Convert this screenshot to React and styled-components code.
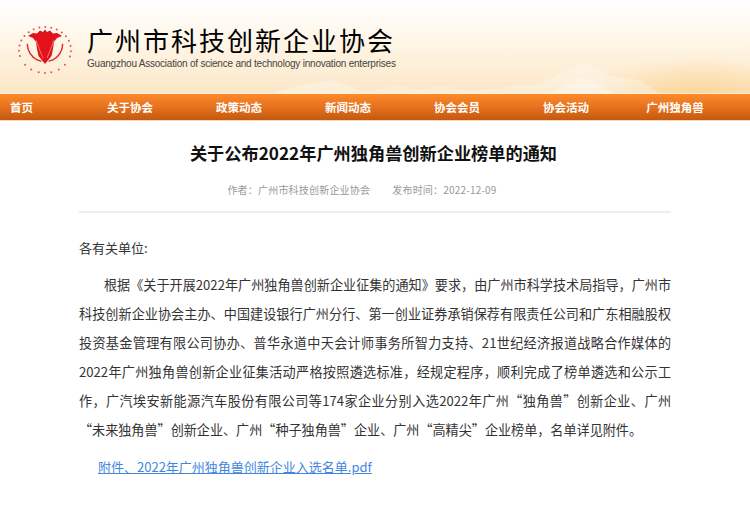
import React from "react";
import styled, { createGlobalStyle } from "styled-components";

const cjk = `"Noto Sans CJK SC", "Liberation Sans", sans-serif`;

const Global = createGlobalStyle`
  html, body { margin: 0; padding: 0; background: #fff; }
  body { font-family: ${cjk}; color: #333; }
`;

const Banner = styled.header`
  position: relative;
  height: 94px;
  display: flex;
  align-items: flex-start;
  overflow: hidden;
  background:
    radial-gradient(ellipse 110px 36px at 700px 94px, #fbd79c 0%, rgba(251,215,156,0) 100%),
    linear-gradient(to bottom, #ffffff 0%, #fffaf2 25%, #fef3e0 55%, #fdebd0 85%, #fce6c6 100%);
`;

const Mountains = styled.svg`
  position: absolute;
  left: 0;
  bottom: 0;
`;

const Logo = styled.svg`
  position: relative;
  flex: none;
  margin: 25px 0 0 16px;
`;

const Brand = styled.div`
  position: relative;
  margin: 24px 0 0 13px;
  display: flex;
  flex-direction: column;
`;

const BrandName = styled.div`
  font-size: 26px;
  line-height: 32px;
  letter-spacing: 2px;
  color: #000;
  white-space: nowrap;
`;

const BrandSub = styled.div`
  margin-top: 1px;
  font-family: "Liberation Sans", Arial, sans-serif;
  font-size: 10px;
  line-height: 14px;
  letter-spacing: -0.22px;
  color: #444;
  white-space: nowrap;
`;

const Nav = styled.nav`
  height: 26px;
  padding-left: 10px;
  display: flex;
  align-items: center;
  background: linear-gradient(to bottom, #fd8a2a 0%, #e87420 45%, #c4590d 100%);
  border-bottom: 1px solid #f4d9c0;
`;

const NavItem = styled.a`
  flex: none;
  width: ${(p) => (p.$first ? "65.5px" : "109px")};
  text-align: ${(p) => (p.$first ? "left" : "center")};
  font-size: 11.5px;
  font-weight: 700;
  line-height: 26px;
  color: #fff;
`;

const Article = styled.main`
  width: 592px;
  margin: 0 auto;
`;

const Title = styled.h1`
  margin: 20px 3px 0 0;
  font-size: 17.2px;
  line-height: 24px;
  font-weight: 700;
  color: #111;
  text-align: center;
`;

const Meta = styled.div`
  margin-top: 17px;
  padding: 0 26px 13px 0;
  display: flex;
  justify-content: center;
  gap: 22px;
  font-size: 10px;
  line-height: 16px;
  letter-spacing: 0.2px;
  color: #999;
  border-bottom: 2px solid #eee;
`;

const Salute = styled.p`
  margin: 20px 0 0;
  font-size: 13px;
  line-height: 29px;
  color: #333;
`;

const Body = styled.p`
  margin: 9px 0 0;
  font-size: 13.1px;
  line-height: 28.9px;
  text-indent: 25px;
  text-align: justify;
  color: #333;
`;

const Attachment = styled.a`
  display: inline-block;
  margin: 8px 0 0 19px;
  font-size: 13px;
  line-height: 29px;
  color: #3f86e0;
  text-decoration: underline;
`;

const rad = (d) => (d * Math.PI) / 180;
// outer ring of tiny characters in the emblem, with a gap either side of the bottom
const ringAngles = [
  ...Array.from({ length: 17 }, (_, i) => 165 + i * 13.2),
  ...[40, 58, 76, 90, 104, 122, 140],
];
const wreathAngles = [8, 24, 40, 56, 70, 110, 124, 140, 156, 172];

const FlowerLogo = () => (
  <Logo width="58" height="50" viewBox="0 0 58 50">
    {ringAngles.map((a) => (
      <circle key={a} cx={29 + 26 * Math.cos(rad(a))} cy={25 + 23 * Math.sin(rad(a))} r="1" fill="#e9505a" />
    ))}
    {wreathAngles.map((a) => {
      const x = 29 + 17.5 * Math.cos(rad(a));
      const y = 19 + 17.5 * Math.sin(rad(a));
      return (
        <line
          key={a}
          x1={x - 2.6 * Math.sin(rad(a))}
          y1={y + 2.6 * Math.cos(rad(a))}
          x2={x + 2.6 * Math.sin(rad(a))}
          y2={y - 2.6 * Math.cos(rad(a))}
          stroke="#e3262c"
          strokeWidth="1.4"
        />
      );
    })}
    <path
      d="M12 11 L17 8 L21 8.5 L24 5.5 L27 7 L29 4.5 L31 7 L34 5.5 L37 8.5 L41 8 L46 11 L41 13 L38 17 L37 24 L35.5 31 L29 39 L22.5 31 L21 24 L20 17 L17 13 Z"
      fill="#e3111b"
    />
    <path d="M20 15 Q23 24 27 33 M38 15 Q35 24 31 33" stroke="#f7a08c" strokeWidth="0.7" fill="none" />
  </Logo>
);

const navItems = ["关于协会", "政策动态", "新闻动态", "协会会员", "协会活动", "广州独角兽"];

export default function App() {
  return (
    <>
      <Global />
      <Banner>
        <Mountains width="750" height="44" viewBox="0 0 750 44">
          <path
            d="M360 44 L385 38 L400 36 L420 40 L440 36 L470 41 L500 38 L540 34 L575 16 L590 14 L610 26 L640 30 L660 44 Z"
            fill="#ffffff"
            opacity="0.28"
          />
          <path
            d="M270 44 L290 38 L310 34 L330 30 L350 36 L370 44 Z M560 38 L580 28 L598 34 L610 42 L612 44 L548 44 Z"
            fill="#ffffff"
            opacity="0.3"
          />
          <path d="M0 44 L0 43.2 L750 43.2 L750 44 Z" fill="#fff3dd" />
        </Mountains>
        <FlowerLogo />
        <Brand>
          <BrandName>广州市科技创新企业协会</BrandName>
          <BrandSub>Guangzhou Association of science and technology innovation enterprises</BrandSub>
        </Brand>
      </Banner>
      <Nav>
        <NavItem $first>首页</NavItem>
        {navItems.map((n) => (
          <NavItem key={n}>{n}</NavItem>
        ))}
      </Nav>
      <Article>
        <Title>关于公布2022年广州独角兽创新企业榜单的通知</Title>
        <Meta>
          <span>{"作者\uFF1A广州市科技创新企业协会"}</span>
          <span>{"发布时间\uFF1A2022-12-09"}</span>
        </Meta>
        <Salute>各有关单位:</Salute>
        <Body>
          {"根据《关于开展2022年广州独角兽创新企业征集的通知》要求\uFF0C由广州市科学技术局指导\uFF0C广州市科技创新企业协会主办、中国建设银行广州分行、第一创业证券承销保荐有限责任公司和广东相融股权投资基金管理有限公司协办、普华永道中天会计师事务所智力支持、21世纪经济报道战略合作媒体的2022年广州独角兽创新企业征集活动严格按照遴选标准\uFF0C经规定程序\uFF0C顺利完成了榜单遴选和公示工作\uFF0C广汽埃安新能源汽车股份有限公司等174家企业分别入选2022年广州\u201C独角兽\u201D创新企业、广州"}
          <wbr />
          {"\u201C未来独角兽\u201D创新企业、广州\u201C种子独角兽\u201D企业、广州\u201C高精尖\u201D企业榜单\uFF0C名单详见附件。"}
        </Body>
        <Attachment>附件、2022年广州独角兽创新企业入选名单.pdf</Attachment>
      </Article>
    </>
  );
}
